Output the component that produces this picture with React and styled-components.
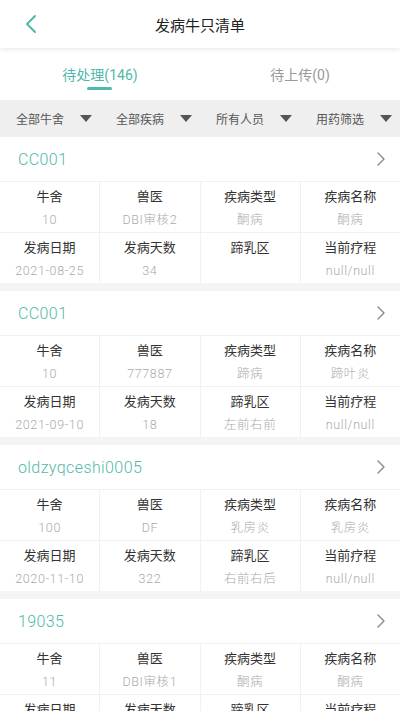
import React, { useState } from 'react';
import styled, { createGlobalStyle } from 'styled-components';

const teal = '#4fb9a9';

const GlobalStyle = createGlobalStyle`
  html, body {
    margin: 0;
    padding: 0;
    background: #f4f4f4;
    font-family: Roboto, "Noto Sans CJK SC", "Noto Sans", sans-serif;
  }
  * {
    box-sizing: border-box;
  }
`;

const Page = styled.div`
  width: 400px;
  min-height: 711px;
  background: #f4f4f4;
  overflow: hidden;
`;

const Header = styled.header`
  position: relative;
  z-index: 2;
  height: 48px;
  display: flex;
  align-items: center;
  justify-content: center;
  background: #fff;
  box-shadow: 0 1px 5px rgba(0, 0, 0, 0.1);
`;

const BackButton = styled.div`
  position: absolute;
  left: 21px;
  top: 14px;
  width: 20px;
  height: 20px;
  display: flex;
  align-items: center;
  justify-content: center;
`;

const Title = styled.h1`
  margin: 0;
  font-size: 15px;
  font-weight: 400;
  color: #222;
`;

const Tabs = styled.div`
  height: 52px;
  display: grid;
  grid-template-columns: 1fr 1fr;
  background: #fff;
`;

const Tab = styled.div`
  position: relative;
  display: flex;
  align-items: center;
  justify-content: center;
  padding-bottom: 1px;
  font-size: 14px;
  color: ${({ active }) => (active ? teal : '#999')};

  &::after {
    content: '';
    display: ${({ active }) => (active ? 'block' : 'none')};
    position: absolute;
    left: 50%;
    bottom: 10px;
    width: 25px;
    height: 3px;
    margin-left: -13px;
    border-radius: 2px;
    background: ${teal};
  }
`;

const FilterBar = styled.div`
  height: 37px;
  display: grid;
  grid-template-columns: repeat(4, 1fr);
  background: #efefef;
`;

const Filter = styled.div`
  display: flex;
  align-items: center;
  padding-left: 16px;
  font-size: 12px;
  color: #555;
`;

const Arrow = styled.span`
  margin-left: 16px;
  width: 0;
  height: 0;
  border-left: 6px solid transparent;
  border-right: 6px solid transparent;
  border-top: 7px solid #555;
`;

const List = styled.div`
  display: flex;
  flex-direction: column;
  gap: 8px;
`;

const Card = styled.section`
  background: #fff;
`;

const CardHead = styled.div`
  height: 44px;
  display: flex;
  align-items: center;
  justify-content: space-between;
  padding: 0 14px 0 18px;
  font-size: 16px;
  font-weight: 300;
  color: ${teal};
  letter-spacing: 0.4px;
`;

const Grid = styled.div`
  display: grid;
  grid-template-columns: repeat(4, 1fr);
  grid-auto-rows: 50px;
  gap: 1px;
  padding-top: 1px;
  background: #f1f1f1;
`;

const Cell = styled.div`
  display: flex;
  flex-direction: column;
  align-items: center;
  padding-top: 5px;
  background: #fff;
`;

const Label = styled.div`
  font-size: 13px;
  line-height: 20px;
  color: #333;
`;

const Value = styled.div`
  margin-top: 3px;
  font-size: 12.5px;
  font-weight: 300;
  line-height: 20px;
  color: #aaa;
  letter-spacing: 0.6px;
`;

const cows = [
  { id: 'CC001', shed: '10', vet: 'DBI审核2', type: '酮病', name: '酮病', date: '2021-08-25', days: '34', area: '', course: 'null/null' },
  { id: 'CC001', shed: '10', vet: '777887', type: '蹄病', name: '蹄叶炎', date: '2021-09-10', days: '18', area: '左前右前', course: 'null/null' },
  { id: 'oldzyqceshi0005', shed: '100', vet: 'DF', type: '乳房炎', name: '乳房炎', date: '2020-11-10', days: '322', area: '右前右后', course: 'null/null' },
  { id: '19035', shed: '11', vet: 'DBI审核1', type: '酮病', name: '酮病', date: '2021-08-25', days: '34', area: '', course: 'null/null' },
];

const ChevronLeft = () => (
  <svg width="14" height="20" viewBox="0 0 14 20">
    <path d="M11 2 L3 10 L11 18" fill="none" stroke={teal} strokeWidth="2" strokeLinecap="round" strokeLinejoin="round" />
  </svg>
);

const ChevronRight = () => (
  <svg width="10" height="16" viewBox="0 0 10 16">
    <path d="M2 2 L8 8 L2 14" fill="none" stroke="#888" strokeWidth="1.4" strokeLinecap="round" strokeLinejoin="round" />
  </svg>
);

const CowCard = ({ cow }) => {
  const cells = [
    ['牛舍', cow.shed],
    ['兽医', cow.vet],
    ['疾病类型', cow.type],
    ['疾病名称', cow.name],
    ['发病日期', cow.date],
    ['发病天数', cow.days],
    ['蹄乳区', cow.area],
    ['当前疗程', cow.course],
  ];

  return (
    <Card>
      <CardHead>
        <span>{cow.id}</span>
        <ChevronRight />
      </CardHead>
      <Grid>
        {cells.map(([label, value]) => (
          <Cell key={label}>
            <Label>{label}</Label>
            <Value>{value}</Value>
          </Cell>
        ))}
      </Grid>
    </Card>
  );
};

export default function App() {
  const [tab, setTab] = useState(0);

  return (
    <Page>
      <GlobalStyle />
      <Header>
        <BackButton>
          <ChevronLeft />
        </BackButton>
        <Title>发病牛只清单</Title>
      </Header>
      <Tabs>
        <Tab active={tab === 0} onClick={() => setTab(0)}>待处理(146)</Tab>
        <Tab active={tab === 1} onClick={() => setTab(1)}>待上传(0)</Tab>
      </Tabs>
      <FilterBar>
        {['全部牛舍', '全部疾病', '所有人员', '用药筛选'].map((f) => (
          <Filter key={f}>
            {f}
            <Arrow />
          </Filter>
        ))}
      </FilterBar>
      <List>
        {cows.map((cow, i) => (
          <CowCard key={i} cow={cow} />
        ))}
      </List>
    </Page>
  );
}
